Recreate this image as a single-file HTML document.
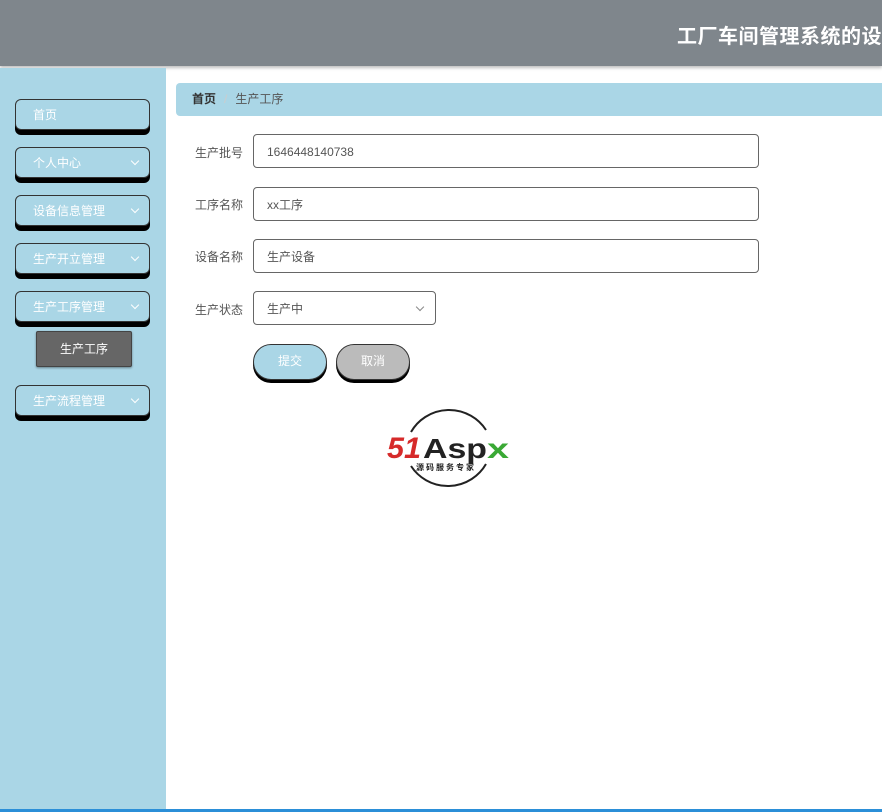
<!DOCTYPE html>
<html><head><meta charset="utf-8"><style>
*{margin:0;padding:0;box-sizing:border-box}
body{width:882px;height:812px;overflow:hidden;background:#fff;font-family:"Liberation Sans","Noto Sans CJK SC",sans-serif;position:relative}
.hd{position:absolute;left:0;top:0;width:882px;height:66px;background:#7f868c;box-shadow:0 2px 3px rgba(0,0,0,.25)}
.hd span{position:absolute;left:677px;top:20px;color:#fff;font-size:20px;font-weight:bold;white-space:nowrap;letter-spacing:0.5px}
.sb{position:absolute;left:0;top:68px;width:166px;height:744px;background:#aad6e6}
.m{position:absolute;left:15px;width:135px;height:31px;background:#aad6e6;border:1.5px solid #333;border-radius:6px;box-shadow:0 5px 0 #000;color:#fff;font-size:12px;line-height:30px;padding-left:17px}
.m i{position:absolute;right:11px;top:10px;width:6px;height:6px;border-right:1px solid #fff;border-bottom:1px solid #fff;transform:rotate(45deg)}
.sub{position:absolute;left:36px;top:331px;width:96px;height:36px;background:#666;border:1px solid #444;border-radius:2px;color:#fff;font-size:12px;text-align:center;line-height:34px;box-shadow:0 1px 2px rgba(0,0,0,.4)}
.bc{position:absolute;left:176px;top:83px;width:706px;height:33px;background:#aad6e6;border-radius:4px 0 0 4px;font-size:12px;line-height:33px;padding-left:16px;color:#555}
.bc b{color:#333}
.lb{position:absolute;left:195px;font-size:12px;color:#555}
.in{position:absolute;left:253px;width:506px;height:34px;border:1.5px solid #666;border-radius:4px;font-size:12px;color:#555;line-height:34px;padding-left:13px}
.bt{position:absolute;top:344px;width:74px;height:36px;border:1.5px solid #333;border-radius:18px;box-shadow:0 3px 0 #000;color:#fff;font-size:12px;text-align:center;line-height:33px}
.bl{position:absolute;left:0;bottom:0;width:882px;height:3px;background:#2b8fd8}
</style></head><body>
<div class="hd"><span>工厂车间管理系统的设计</span></div>
<div class="sb"></div>
<div class="m" style="top:99px">首页</div>
<div class="m" style="top:147px">个人中心<i></i></div>
<div class="m" style="top:195px">设备信息管理<i></i></div>
<div class="m" style="top:243px">生产开立管理<i></i></div>
<div class="m" style="top:291px">生产工序管理<i></i></div>
<div class="sub">生产工序</div>
<div class="m" style="top:385px">生产流程管理<i></i></div>
<div class="bc"><b>首页</b><span style="color:#ccc;margin:0 8px">/</span>生产工序</div>
<div class="lb" style="top:144px">生产批号</div>
<div class="in" style="top:134px">1646448140738</div>
<div class="lb" style="top:196px">工序名称</div>
<div class="in" style="top:187px">xx工序</div>
<div class="lb" style="top:248px">设备名称</div>
<div class="in" style="top:239px">生产设备</div>
<div class="lb" style="top:301px">生产状态</div>
<div class="in" style="top:291px;width:183px">生产中<span style="position:absolute;right:12px;top:12px;width:6px;height:6px;border-right:1px solid #888;border-bottom:1px solid #888;transform:rotate(45deg)"></span></div>
<div class="bt" style="left:253px;background:#aad6e6">提交</div>
<div class="bt" style="left:336px;background:#bbb">取消</div>
<svg style="position:absolute;left:386px;top:402px" width="126" height="92" viewBox="0 0 126 92">
<path d="M25 30 A44 44 0 0 1 100 28" fill="none" stroke="#222" stroke-width="2"/>
<path d="M100 62 A44 44 0 0 1 25 64" fill="none" stroke="#222" stroke-width="2"/>
<text x="1" y="56" font-family="Liberation Sans,sans-serif" font-size="30" font-weight="bold" font-style="italic" fill="#d62a2a" textLength="34" lengthAdjust="spacingAndGlyphs">51</text>
<text x="37" y="56" font-family="Liberation Sans,sans-serif" font-size="28" font-weight="bold" fill="#222" textLength="64" lengthAdjust="spacingAndGlyphs">Asp</text>
<text x="101" y="56" font-family="Liberation Sans,sans-serif" font-size="28" font-weight="bold" fill="#3aa935" textLength="22" lengthAdjust="spacingAndGlyphs">x</text>
<text x="30" y="68" font-family="Noto Sans CJK SC,sans-serif" font-size="8" font-weight="bold" fill="#222" letter-spacing="2">源码服务专家</text>
</svg>
<div class="bl"></div>
</body></html>
